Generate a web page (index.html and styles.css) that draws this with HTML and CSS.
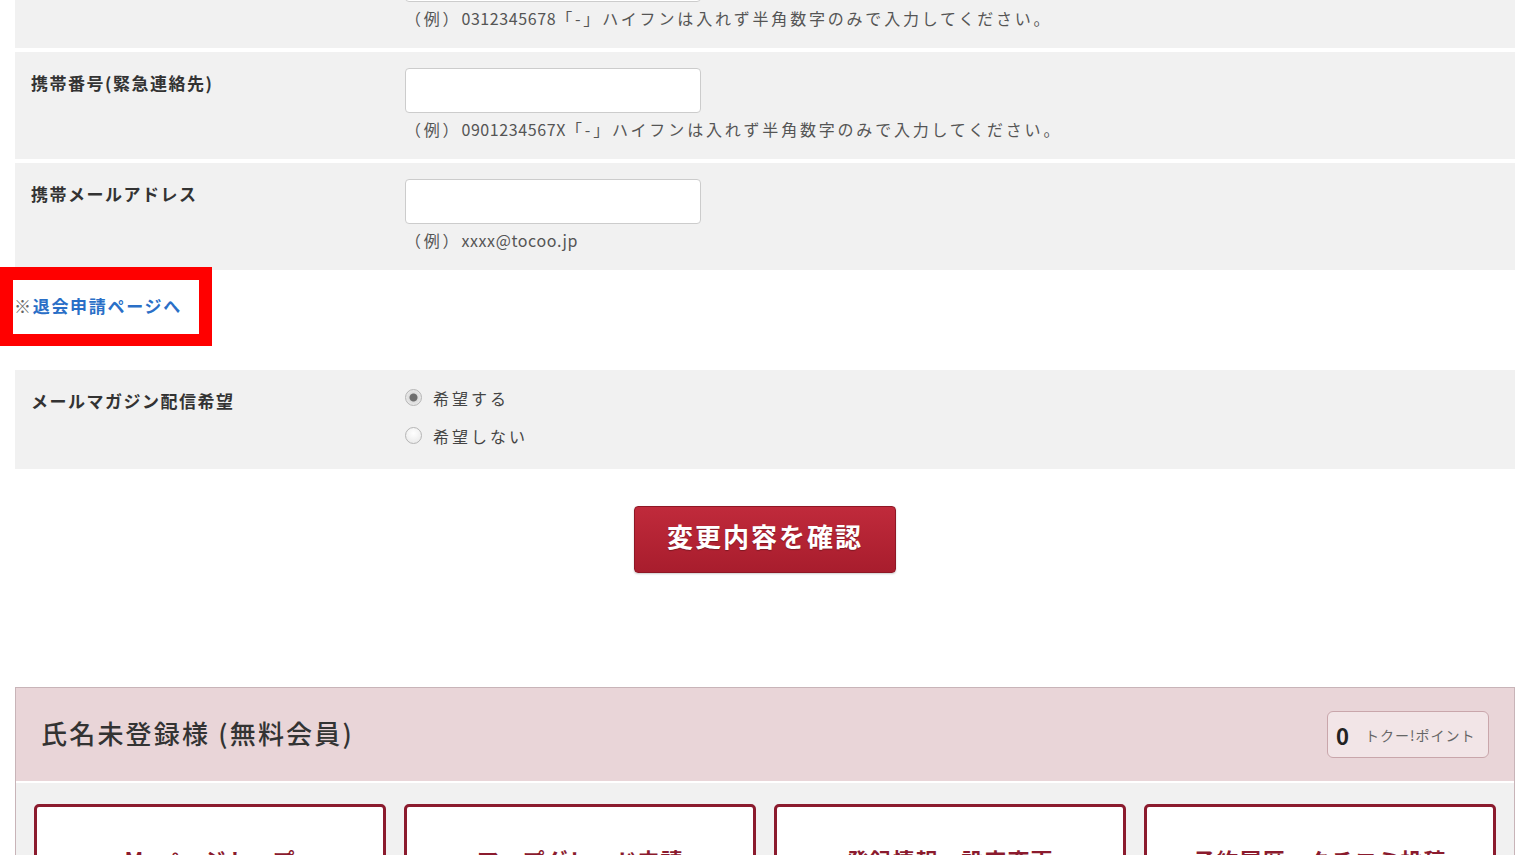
FILE: index.html
```html
<!DOCTYPE html>
<html lang="ja">
<head>
<meta charset="utf-8">
<title>会員情報変更</title>
<link rel="stylesheet" href="styles.css">
</head>
<body>
<div class="page">
  <form class="form">
    <div class="row">
      <div class="label">電話番号</div>
      <div class="field">
        <input class="text" type="text">
        <p class="hint">（例）<span class="latin">0312345678</span>「-」ハイフンは入れず半角数字のみで入力してください。</p>
      </div>
    </div>
    <div class="row">
      <div class="label">携帯番号(緊急連絡先)</div>
      <div class="field">
        <input class="text" type="text">
        <p class="hint">（例）<span class="latin">0901234567X</span>「-」ハイフンは入れず半角数字のみで入力してください。</p>
      </div>
    </div>
    <div class="row">
      <div class="label">携帯メールアドレス</div>
      <div class="field">
        <input class="text" type="text">
        <p class="hint">（例）<span class="latin">xxxx@tocoo.jp</span></p>
      </div>
    </div>
    <div class="withdraw">
      <span class="mark">※</span><a class="withdraw-link" href="#">退会申請ページへ</a>
      <div class="highlight"></div>
    </div>
    <div class="row row-radio">
      <div class="label">メールマガジン配信希望</div>
      <div class="field radios">
        <label class="option"><input class="radio" type="radio" name="mag" checked><span>希望する</span></label>
        <label class="option"><input class="radio" type="radio" name="mag"><span>希望しない</span></label>
      </div>
    </div>
    <div class="actions">
      <button class="submit" type="button">変更内容を確認</button>
    </div>
  </form>

  <section class="member">
    <header class="member-head">
      <h2 class="member-name">氏名未登録様 (無料会員)</h2>
      <div class="points"><span class="points-num">0</span><span class="points-label">トクー!ポイント</span></div>
    </header>
    <div class="member-body">
      <a class="card" href="#">Myページトップ</a>
      <a class="card" href="#">アップグレード申請</a>
      <a class="card" href="#">登録情報・設定変更</a>
      <a class="card" href="#">予約履歴・クチコミ投稿</a>
    </div>
  </section>
</div>
</body>
</html>
```
FILE: styles.css
```css
* { box-sizing: border-box; }
html, body { margin: 0; padding: 0; background: #fff; }
body {
  font-family: "Noto Sans CJK JP", "Noto Sans", sans-serif;
  color: #333;
  overflow: hidden;
  height: 855px;
}
.page {
  width: 1500px;
  margin: -59px 0 0 15px;
}
.form { margin: 0; }
.row {
  display: grid;
  grid-template-columns: 374px 1fr;
  background: #f1f1f1;
  padding: 16px 0 18px 16px;
  margin-bottom: 4px;
}
.label {
  font-size: 17px;
  font-weight: bold;
  letter-spacing: 1.5px;
  line-height: 24px;
  margin-top: 3px;
  color: #333;
}
.text {
  display: block;
  width: 296px;
  height: 45px;
  border: 1px solid #ccc;
  border-radius: 4px;
  background: #fff;
  margin: 0;
  font-size: 16px;
}
.hint {
  margin: 4px 0 0 0;
  font-size: 16px;
  line-height: 24px;
  color: #555;
  letter-spacing: 2.8px;
}
.latin { letter-spacing: 0.6px; }
.withdraw {
  position: relative;
  height: 100px;
  margin-top: -4px;
  padding-top: 24px;
  font-size: 17px;
  line-height: 24px;
  font-weight: bold;
  letter-spacing: 1.7px;
}
.mark { color: #666; font-weight: normal; margin-left: -1px; }
.withdraw-link { color: #2a6fc7; text-decoration: none; }
.highlight {
  position: absolute;
  left: -15px;
  top: -3px;
  width: 212px;
  height: 79px;
  border: 13px solid #ff0000;
  border-bottom-width: 12px;
  pointer-events: none;
}
.row-radio { padding-bottom: 14px; }
.radios { margin-top: -7px; }
.option {
  display: flex;
  align-items: center;
  height: 38px;
  font-size: 16px;
  letter-spacing: 3px;
  color: #444;
}
.radio {
  appearance: none;
  -webkit-appearance: none;
  width: 17px;
  height: 17px;
  margin: 0 11px 0 0;
  border-radius: 50%;
  border: 1px solid #b5b5b5;
  background: radial-gradient(circle at 50% 35%, #ffffff 0%, #e6e6e6 100%);
  position: relative;
  top: -1px;
}
.radio:checked {
  background: radial-gradient(circle, #6e6e6e 0 3.5px, #dcdcdc 4.5px, #f4f4f4 100%);
}
.actions {
  display: flex;
  justify-content: center;
  padding-top: 33px;
}
.submit {
  width: 262px;
  height: 67px;
  border: 1px solid #8f1725;
  border-radius: 4px;
  background: linear-gradient(#c02a3b, #a81d2d);
  color: #fff;
  font-family: inherit;
  font-size: 26px;
  font-weight: bold;
  letter-spacing: 2px;
  text-shadow: 0 1px 1px rgba(0,0,0,0.3);
  box-shadow: 0 1px 2px rgba(0,0,0,0.2);
  padding: 0 0 8px 0;
}
.member {
  margin-top: 114px;
  border: 1px solid #c8b4b8;
}
.member-head {
  display: flex;
  align-items: center;
  justify-content: space-between;
  height: 95px;
  padding: 0 25px 0 25px;
  background: #e9d5d8;
  border-bottom: 2px solid #fff;
}
.member-name {
  margin: 0 0 4px 0;
  font-size: 26px;
  font-weight: 500;
  letter-spacing: 2.2px;
  color: #333;
}
.points {
  display: flex;
  align-items: center;
  width: 162px;
  height: 47px;
  padding: 0 0 0 8px;
  border: 1px solid #c9a6ab;
  border-radius: 6px;
  background: #f2e5e7;
}
.points-num {
  font-size: 22px;
  font-weight: bold;
  color: #222;
  margin-right: 16px;
}
.points-label {
  font-size: 14px;
  letter-spacing: 1px;
  color: #666;
}
.member-body {
  display: grid;
  grid-template-columns: repeat(4, 1fr);
  gap: 18px;
  padding: 21px 18px 20px 18px;
  background: #f1f1f1;
}
.card {
  display: block;
  height: 120px;
  padding-top: 36px;
  background: #fff;
  border: 3px solid #8b1b2e;
  border-radius: 5px;
  text-align: center;
  font-size: 22px;
  font-weight: bold;
  letter-spacing: 1px;
  color: #8b1b2e;
  text-decoration: none;
}
```
